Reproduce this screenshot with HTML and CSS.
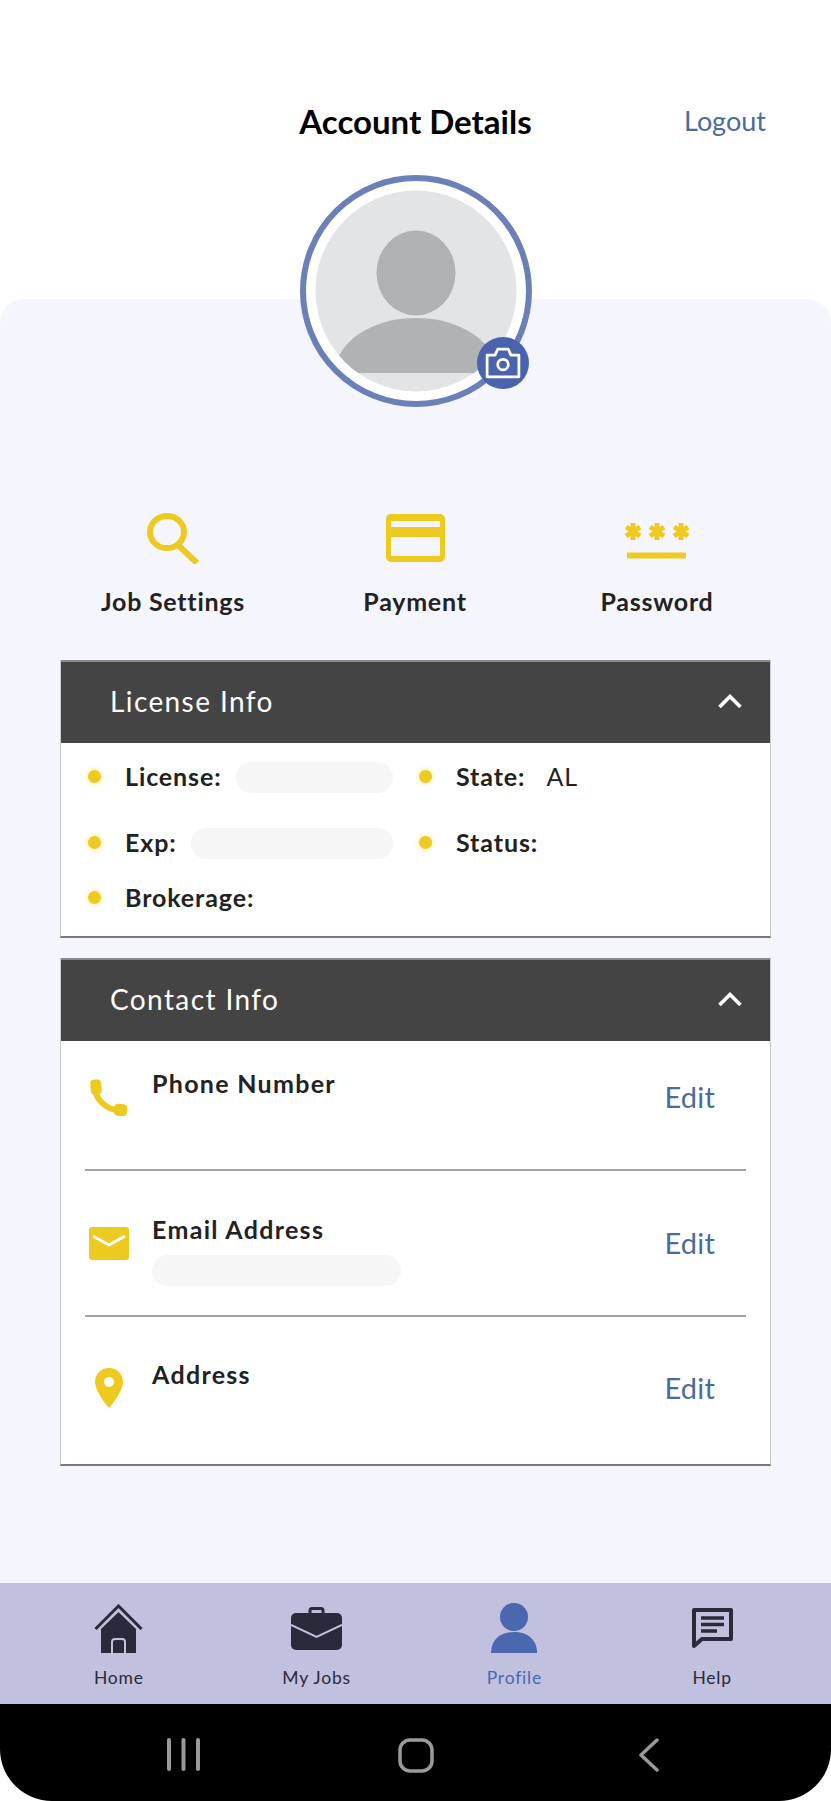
FILE: index.html
```html
<!DOCTYPE html>
<html lang="en">
<head>
    <meta charset="UTF-8">
    <meta name="viewport" content="width=device-width, initial-scale=1.0">
    <title>Account Details</title>
    <link rel="stylesheet" href="styles.css">
</head>
<body>
    <div class="page">
        <header class="top-bar">
            <h1 class="page-title">Account Details</h1>
            <a class="logout-link">Logout</a>
        </header>

        <div class="avatar">
            <svg class="avatar-picture" viewBox="0 0 220 220" width="220" height="220">
                <defs>
                    <clipPath id="avatarClip"><circle cx="110" cy="110" r="100.5"/></clipPath>
                </defs>
                <circle cx="110" cy="110" r="100.5" fill="#e2e4e5"/>
                <ellipse cx="110" cy="92" rx="39.5" ry="42.5" fill="#afb3b4"/>
                <path d="M29 192 A81 55 0 0 1 191 192 Z" fill="#afb3b4" clip-path="url(#avatarClip)"/>
            </svg>
            <div class="camera-badge">
                <svg viewBox="0 0 34 30" width="36" height="32" fill="none" stroke="#fff" stroke-width="2.6" stroke-linejoin="round">
                    <path d="M2 7.5 H9.5 L12 2 H22 L24.5 7.5 H32 V28 H2 Z"/>
                    <circle cx="17" cy="16.5" r="5"/>
                </svg>
            </div>
        </div>

        <main class="panel">
            <section class="shortcuts">
                <div class="shortcut">
                    <div class="shortcut-icon">
                        <svg viewBox="0 0 52 51" width="52" height="51" fill="none" stroke="#eec920" stroke-width="6">
                            <ellipse cx="20" cy="19" rx="17" ry="16"/>
                            <line x1="31" y1="32" x2="50" y2="50"/>
                        </svg>
                    </div>
                    <div class="shortcut-label">Job Settings</div>
                </div>
                <div class="shortcut">
                    <div class="shortcut-icon">
                        <svg viewBox="0 0 59 48" width="59" height="48">
                            <rect width="59" height="48" rx="5" fill="#eec920"/>
                            <rect x="5" y="7" width="49" height="6" fill="#f5f5fd"/>
                            <rect x="5" y="23" width="49" height="19" fill="#f5f5fd"/>
                        </svg>
                    </div>
                    <div class="shortcut-label">Payment</div>
                </div>
                <div class="shortcut">
                    <div class="shortcut-icon">
                        <svg viewBox="0 0 66 52" width="66" height="52" stroke="#eec920" fill="none">
                            <g stroke-width="5">
                                <path d="M9 11 V28 M2 15 L16 24 M16 15 L2 24"/>
                                <path d="M33 11 V28 M26 15 L40 24 M40 15 L26 24"/>
                                <path d="M57 11 V28 M50 15 L64 24 M64 15 L50 24"/>
                            </g>
                            <line x1="3" y1="43.5" x2="62" y2="43.5" stroke-width="6"/>
                        </svg>
                    </div>
                    <div class="shortcut-label">Password</div>
                </div>
            </section>

            <section class="card">
                <div class="card-header">
                    <span>License Info</span>
                    <svg class="chevron" viewBox="0 0 24 14" width="24" height="14" fill="none" stroke="#fff" stroke-width="3.6"><path d="M1.5 13 L12 2.5 L22.5 13"/></svg>
                </div>
                <div class="license-grid">
                    <div class="license-item"><span class="dot"></span><b>License:</b><span class="blank-pill"></span></div>
                    <div class="license-item"><span class="dot"></span><b>State:</b><span class="license-value">AL</span></div>
                    <div class="license-item"><span class="dot"></span><b>Exp:</b><span class="blank-pill"></span></div>
                    <div class="license-item"><span class="dot"></span><b>Status:</b></div>
                    <div class="license-item"><span class="dot"></span><b>Brokerage:</b></div>
                </div>
            </section>

            <section class="card">
                <div class="card-header">
                    <span>Contact Info</span>
                    <svg class="chevron" viewBox="0 0 24 14" width="24" height="14" fill="none" stroke="#fff" stroke-width="3.6"><path d="M1.5 13 L12 2.5 L22.5 13"/></svg>
                </div>
                <div class="contact-row contact-phone">
                    <div class="contact-icon">
                        <svg viewBox="0 0 37 37" width="37" height="37" fill="#eec920">
                            <path d="M5 10 C6 20 15 30 28 31" fill="none" stroke="#eec920" stroke-width="6"/>
                            <rect x="0.5" y="0.5" width="11" height="15" rx="4" transform="rotate(-6 6 8)"/>
                            <rect x="24" y="25" width="13" height="12" rx="4" transform="rotate(6 30 31)"/>
                        </svg>
                    </div>
                    <div class="contact-text"><div class="contact-label">Phone Number</div></div>
                    <a class="edit-link">Edit</a>
                </div>
                <div class="contact-row contact-email">
                    <div class="contact-icon">
                        <svg viewBox="0 0 40 33" width="40" height="33">
                            <rect width="40" height="33" rx="3" fill="#eec920"/>
                            <path d="M4 9 L20 18 L36 9" fill="none" stroke="#fff" stroke-width="3"/>
                        </svg>
                    </div>
                    <div class="contact-text">
                        <div class="contact-label">Email Address</div>
                        <div class="blank-pill email-pill"></div>
                    </div>
                    <a class="edit-link">Edit</a>
                </div>
                <div class="contact-row contact-address">
                    <div class="contact-icon">
                        <svg viewBox="0 0 28 40" width="28" height="40">
                            <path d="M14 0 C6 0 0 6 0 14 C0 24 14 40 14 40 C14 40 28 24 28 14 C28 6 22 0 14 0 Z" fill="#eec920"/>
                            <circle cx="14" cy="14" r="5" fill="#fff"/>
                        </svg>
                    </div>
                    <div class="contact-text"><div class="contact-label">Address</div></div>
                    <a class="edit-link">Edit</a>
                </div>
            </section>
        </main>

        <nav class="tab-bar">
            <a class="tab">
                <span class="tab-icon">
                    <svg viewBox="0 0 49 49" width="49" height="49">
                        <polyline points="1.5,25 24.5,2 47.5,25" fill="none" stroke="#2a2a3a" stroke-width="3"/>
                        <path d="M7 25 L24.5 8 L42 25 V49 H7 Z" fill="#2a2a3a"/>
                        <path d="M18 49 V38 Q18 35 21 35 H28 Q31 35 31 38 V49" fill="none" stroke="#c2c0df" stroke-width="2"/>
                    </svg>
                </span>
                Home
            </a>
            <a class="tab">
                <span class="tab-icon">
                    <svg viewBox="0 0 51 43" width="51" height="43">
                        <path d="M19 7 V3.500 Q19 1.500 21 1.500 H30 Q32 1.500 32 3.500 V7" fill="none" stroke="#2a2a3a" stroke-width="3"/>
                        <rect y="6" width="51" height="37" rx="5" fill="#2a2a3a"/>
                        <path d="M0 18 L25.500 30 L51 18" fill="none" stroke="#c2c0df" stroke-width="2"/>
                    </svg>
                </span>
                My Jobs
            </a>
            <a class="tab tab-active">
                <span class="tab-icon">
                    <svg viewBox="0 0 46 50" width="46" height="50" fill="#4a67b0">
                        <ellipse cx="23" cy="14" rx="14" ry="14"/>
                        <path d="M0 50 C0 36 10 29 23 29 C36 29 46 36 46 50 Z"/>
                    </svg>
                </span>
                Profile
            </a>
            <a class="tab">
                <span class="tab-icon">
                    <svg viewBox="0 0 41 40" width="41" height="40" fill="none" stroke="#2a2a3a">
                        <path d="M2 2 H39 V31 H10 L2 38 Z" stroke-width="4" stroke-linejoin="round"/>
                        <path d="M9 10 H32 M9 16.500 H32 M9 23 H25" stroke-width="3.500"/>
                    </svg>
                </span>
                Help
            </a>
        </nav>

        <div class="system-bar">
            <svg viewBox="0 0 34 33" width="34" height="33" stroke="#9a9a9a" stroke-width="4" stroke-linecap="round">
                <path d="M3 2 V31 M17.500 2 V31 M32 2 V31"/>
            </svg>
            <svg viewBox="0 0 36 35" width="36" height="35" fill="none" stroke="#9a9a9a" stroke-width="3.500">
                <rect x="2" y="2" width="32" height="31" rx="10"/>
            </svg>
            <svg viewBox="0 0 22 34" width="22" height="34" fill="none" stroke="#9a9a9a" stroke-width="3.500" stroke-linecap="round" stroke-linejoin="round">
                <path d="M19 2 L3 17 L19 32"/>
            </svg>
        </div>
    </div>
</body>
</html>
```

FILE: styles.css
```css
body {
    margin: 0;
    padding: 0;
    font-family: 'Lato', 'Liberation Sans', sans-serif;
    background-color: #ffffff;
    color: #222222;
}

.page {
    display: flex;
    flex-direction: column;
    height: 1801px;
    overflow: hidden;
}

.top-bar {
    display: grid;
    grid-template-columns: 1fr auto 1fr;
    align-items: center;
    padding: 103px 65px 0 65px;
    height: 36px;
}

.page-title {
    grid-column: 2;
    margin: 0;
    font-size: 33px;
    line-height: 36px;
    font-weight: 700;
    color: #000000;
}

.logout-link {
    justify-self: end;
    font-size: 27px;
    line-height: 36px;
    color: #4a6b9c;
}

.avatar {
    position: relative;
    z-index: 1;
    box-sizing: border-box;
    width: 232px;
    height: 232px;
    margin: 36px auto 0 auto;
    border: 6px solid #6b80b8;
    border-radius: 50%;
    background-color: #ffffff;
}

.avatar-picture {
    display: block;
}

.camera-badge {
    position: absolute;
    right: -3px;
    bottom: 12px;
    display: flex;
    justify-content: center;
    align-items: center;
    width: 52px;
    height: 52px;
    border-radius: 50%;
    background-color: #4a63ad;
}

.panel {
    flex: 1;
    margin-top: -108px;
    padding: 213px 60px 0 60px;
    background-color: #f5f5fd;
    border-radius: 24px 24px 0 0;
}

.shortcuts {
    display: grid;
    grid-template-columns: repeat(3, 242px);
    margin: 0 -8px 44px -8px;
}

.shortcut {
    display: flex;
    flex-direction: column;
    align-items: center;
}

.shortcut-icon {
    display: flex;
    align-items: center;
    height: 52px;
    margin-bottom: 22px;
}

.shortcut-label {
    font-size: 25px;
    line-height: 30px;
    font-weight: 700;
    letter-spacing: 0.75px;
}

.card {
    margin-bottom: 20px;
    background-color: #ffffff;
    border: 1px solid #c9c9d2;
    border-top: 0;
    border-bottom: 2px solid #77777f;
}

.card-header {
    display: flex;
    justify-content: space-between;
    align-items: center;
    box-sizing: border-box;
    height: 83px;
    padding: 0 28px 4px 49px;
    background-color: #444444;
    border-top: 2px solid #8a8a8a;
    color: #ffffff;
    font-size: 28px;
    letter-spacing: 1.4px;
}

.license-grid {
    display: grid;
    grid-template-columns: 305px 1fr;
    grid-template-rows: 66px 55px 32px;
    column-gap: 26px;
    padding: 17px 0 23px 27px;
}

.license-item {
    display: flex;
    align-items: center;
    height: 32px;
    font-size: 25px;
}

.license-item b {
    letter-spacing: 0.9px;
}

.dot {
    flex: none;
    width: 13px;
    height: 13px;
    margin-right: 24px;
    border-radius: 50%;
    background-color: #eec920;
    box-shadow: 0 0 4px 2px #fdf3c0;
}

.blank-pill {
    flex: 1;
    height: 31px;
    margin: 3px 0 0 14px;
    border-radius: 16px;
    background-color: #f6f6f7;
}

.license-value {
    margin-left: 21px;
    letter-spacing: 1px;
}

.contact-row {
    display: flex;
    align-items: flex-start;
    box-sizing: border-box;
    margin: 0 24px;
    padding: 44px 31px 0 0;
    height: 146px;
    border-bottom: 2px solid #a2a2a6;
}

.contact-phone {
    height: 130px;
    padding-top: 28px;
}

.contact-address {
    height: 147px;
    padding-top: 43px;
    border-bottom: 0;
}

.contact-icon {
    flex: none;
    display: flex;
    justify-content: center;
    align-items: center;
    width: 47px;
    height: 56px;
    margin-right: 20px;
}

.contact-text {
    flex: 1;
}

.contact-label {
    margin-top: -1px;
    font-size: 25px;
    line-height: 30px;
    font-weight: 700;
    letter-spacing: 1.3px;
}

.email-pill {
    width: 249px;
    margin: 11px 0 0 0;
}

.edit-link {
    font-size: 29px;
    line-height: 56px;
    letter-spacing: 0.2px;
    color: #4a6b9c;
}

.tab-bar {
    display: grid;
    grid-template-columns: repeat(4, 1fr);
    box-sizing: border-box;
    height: 121px;
    padding: 20px 20px 0 20px;
    background-color: #c2c0df;
}

.tab {
    display: flex;
    flex-direction: column;
    align-items: center;
    font-size: 17.500px;
    line-height: 22px;
    letter-spacing: 0.8px;
    color: #2a2a3a;
}

.tab-active {
    color: #4a67b0;
}

.tab-icon {
    display: flex;
    align-items: center;
    height: 50px;
    margin-bottom: 14px;
}

.system-bar {
    display: grid;
    grid-template-columns: repeat(3, 233px);
    justify-items: center;
    align-items: start;
    box-sizing: border-box;
    height: 97px;
    padding: 34px 66px 0 66px;
    background-color: #000000;
    border-radius: 0 0 52px 52px;
}
```
